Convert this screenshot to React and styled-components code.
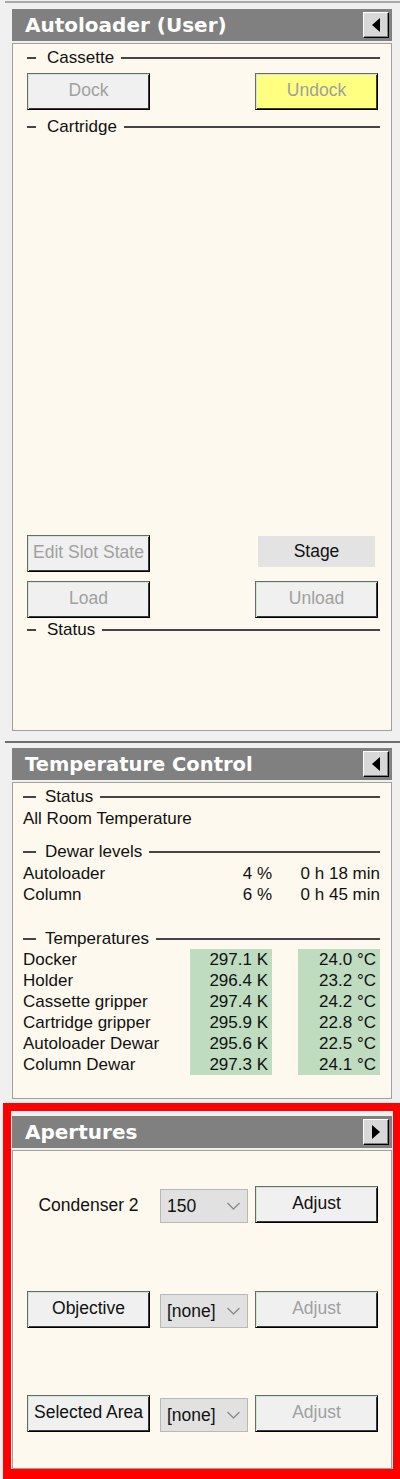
import React from 'react';
import styled, { createGlobalStyle } from 'styled-components';

const Global = createGlobalStyle`
  html, body { margin: 0; padding: 0; background: #f0f0f0; }
  body { width: 400px; height: 1479px; overflow: hidden; font-family: "Liberation Sans", Arial, sans-serif; color: #111; }
`;

const Page = styled.div`
  width: 400px;
  height: 1479px;
  overflow: hidden;
  background: #f0f0f0;
  padding-top: ${p => p.$pt}px;
  box-sizing: border-box;
`;

const Rule = styled.div`
  margin-left: 5px;
  margin-top: ${p => p.$mt || 0}px;
  margin-bottom: ${p => p.$mb}px;
  height: 2px;
  background: ${p => p.$c};
`;

const Panel = styled.section`
  margin-left: ${p => p.$ml}px;
  width: 380px;
`;

const Header = styled.div`
  height: 32px;
  background: #808080;
  display: flex;
  align-items: center;
  justify-content: space-between;
  padding: 0 3px 0 13px;
  box-sizing: border-box;
`;

const Title = styled.h2`
  margin: 0;
  font-family: "DejaVu Sans", Verdana, sans-serif;
  font-weight: bold;
  font-size: ${p => p.$fs}px;
  color: #fff;
  letter-spacing: 0;
`;

const CollapseBtn = styled.button`
  width: 26px;
  height: 26px;
  padding: 0;
  display: flex;
  align-items: center;
  justify-content: center;
  background: #d8d8d8;
  border: 1px solid;
  border-color: #fff #000 #000 #fff;
  box-shadow: inset -1px -1px 0 #808080;
  box-sizing: border-box;
`;

const Content = styled.div`
  margin-top: 2px;
  height: ${p => p.$h}px;
  background: #fdf9ee;
  border: 1px solid #a0a0a0;
  box-sizing: border-box;
  padding: ${p => p.$pad};
  display: flex;
  flex-direction: column;
`;

const Legend = styled.div`
  display: flex;
  align-items: center;
  height: 20px;
  margin-top: ${p => p.$mt || 0}px;
  font-size: 17px;
  &::before {
    content: "";
    width: ${p => p.$lead}px;
    height: 2px;
    background: #454545;
    margin-right: ${p => p.$gap}px;
    flex: none;
  }
  &::after {
    content: "";
    flex: 1;
    height: 2px;
    background: #454545;
    margin-left: 7px;
  }
`;

const BtnRow = styled.div`
  display: flex;
  justify-content: space-between;
  align-items: flex-start;
  padding-right: 2px;
  margin-top: ${p => p.$mt || 0}px;
`;

const WinButton = styled.button`
  width: 123px;
  height: 37px;
  padding: 0 0 2px;
  font-family: "Liberation Sans", Arial, sans-serif;
  font-size: 17.5px;
  white-space: nowrap;
  color: ${p => (p.$disabled ? '#a0a0a0' : '#111')};
  background: ${p => p.$bg || '#f0f0f0'};
  border: 1px solid;
  border-color: #6a6a6a #000 #000 #6a6a6a;
  box-shadow: inset 1px 1px 0 #cfe8cf, inset -1px -1px 0 #3a3a3a;
  box-sizing: border-box;
`;

const SlotArea = styled.div`
  height: ${p => p.$h}px;
`;

const RightCol = styled.div`
  width: 123px;
  display: flex;
  justify-content: center;
`;

const StageLabel = styled.div`
  margin-top: 1px;
  width: 117px;
  height: 31px;
  background: #e3e3e3;
  display: flex;
  align-items: center;
  justify-content: center;
  font-size: 17.5px;
  color: #111;
`;

const TextLine = styled.div`
  height: 21px;
  line-height: 21px;
  font-size: 17px;
  margin-top: ${p => p.$mt || 0}px;
`;

const DataGrid = styled.div`
  display: grid;
  grid-template-columns: 1fr 82px 82px;
  column-gap: 26px;
  margin-top: ${p => p.$mt || 0}px;
  font-size: 17px;
`;

const Cell = styled.div`
  height: 21px;
  line-height: 21px;
  white-space: nowrap;
  text-align: ${p => p.$align || 'left'};
  padding-right: ${p => p.$pr || 0}px;
  background: ${p => p.$bg || 'transparent'};
`;

const HighlightFrame = styled.div`
  margin-top: 4px;
  margin-left: 3px;
  width: 398px;
  border: 8px solid #ff0000;
  border-bottom-width: 14px;
  padding-top: 5px;
  box-sizing: border-box;
  background: #f0f0f0;
`;

const ApRows = styled.div`
  display: flex;
  flex-direction: column;
  gap: 67px;
`;

const ApRow = styled.div`
  display: flex;
  align-items: flex-start;
  gap: 0;
`;

const ApLabel = styled.div`
  width: 123px;
  height: 38px;
  display: flex;
  align-items: center;
  justify-content: center;
  font-size: 17.5px;
  color: #111;
`;

const Select = styled.div`
  width: 88px;
  height: 34px;
  margin: 3px 7px 0 10px;
  background: #e1e1e1;
  border: 1px solid #b8b8b8;
  box-sizing: border-box;
  display: flex;
  align-items: center;
  justify-content: space-between;
  padding: 0 7px 0 6px;
  font-size: 17.5px;
  color: #111;
`;

const Arrow = ({ dir }) => (
  <svg width="8" height="14" viewBox="0 0 8 14">
    <polygon points={dir === 'left' ? '8,0 8,14 0,7' : '0,0 0,14 8,7'} fill="#000" />
  </svg>
);

const Chevron = () => (
  <svg width="13" height="8" viewBox="0 0 13 8">
    <polyline points="0.5,1 6.5,7 12.5,1" fill="none" stroke="#8a8a8a" strokeWidth="1.3" />
  </svg>
);

const PanelHeader = ({ title, dir, fs }) => (
  <Header>
    <Title $fs={fs}>{title}</Title>
    <CollapseBtn aria-label="toggle">
      <Arrow dir={dir} />
    </CollapseBtn>
  </Header>
);

const temps = [
  ['Docker', '297.1 K', '24.0 °C'],
  ['Holder', '296.4 K', '23.2 °C'],
  ['Cassette gripper', '297.4 K', '24.2 °C'],
  ['Cartridge gripper', '295.9 K', '22.8 °C'],
  ['Autoloader Dewar', '295.6 K', '22.5 °C'],
  ['Column Dewar', '297.3 K', '24.1 °C'],
];

const GREEN = '#c0dcc0';

export default function App() {
  return (
    <Page $pt={1}>
      <Global />
      <Rule $c="#a8a8a8" $mb={6} />
      <Panel $ml={12}>
        <PanelHeader title="Autoloader (User)" dir="left" fs={20} />
        <Content $h={688} $pad="4px 11px 0 14px">
          <Legend $lead={9} $gap={11}>Cassette</Legend>
          <BtnRow $mt={5}>
            <WinButton $disabled>Dock</WinButton>
            <WinButton $disabled $bg="#ffff80">Undock</WinButton>
          </BtnRow>
          <Legend $lead={9} $gap={11} $mt={7}>Cartridge</Legend>
          <SlotArea $h={398} />
          <BtnRow>
            <WinButton $disabled>Edit Slot State</WinButton>
            <RightCol>
              <StageLabel>Stage</StageLabel>
            </RightCol>
          </BtnRow>
          <BtnRow $mt={9}>
            <WinButton $disabled>Load</WinButton>
            <WinButton $disabled>Unload</WinButton>
          </BtnRow>
          <Legend $lead={9} $gap={11} $mt={2}>Status</Legend>
        </Content>
      </Panel>

      <Rule $c="#6e6e6e" $mt={10} $mb={5} />
      <Panel $ml={12}>
        <PanelHeader title="Temperature Control" dir="left" fs={19.5} />
        <Content $h={317} $pad="4px 11px 0 10px">
          <Legend $lead={13} $gap={9}>Status</Legend>
          <TextLine $mt={1}>All Room Temperature</TextLine>
          <Legend $lead={13} $gap={9} $mt={13}>Dewar levels</Legend>
          <DataGrid $mt={1}>
            <Cell>Autoloader</Cell>
            <Cell $align="right">4 %</Cell>
            <Cell $align="right">0 h 18 min</Cell>
            <Cell>Column</Cell>
            <Cell $align="right">6 %</Cell>
            <Cell $align="right">0 h 45 min</Cell>
          </DataGrid>
          <Legend $lead={13} $gap={9} $mt={24}>Temperatures</Legend>
          <DataGrid>
            {temps.map(([name, k, c]) => (
              <React.Fragment key={name}>
                <Cell>{name}</Cell>
                <Cell $align="right" $pr={4} $bg={GREEN}>{k}</Cell>
                <Cell $align="right" $pr={4} $bg={GREEN}>{c}</Cell>
              </React.Fragment>
            ))}
          </DataGrid>
        </Content>
      </Panel>

      <HighlightFrame>
        <Panel $ml={1}>
          <PanelHeader title="Apertures" dir="right" fs={20} />
          <Content $h={319} $pad="35px 0 0 14px">
            <ApRows>
              <ApRow>
                <ApLabel>Condenser 2</ApLabel>
                <Select>150<Chevron /></Select>
                <WinButton>Adjust</WinButton>
              </ApRow>
              <ApRow>
                <WinButton>Objective</WinButton>
                <Select>[none]<Chevron /></Select>
                <WinButton $disabled>Adjust</WinButton>
              </ApRow>
              <ApRow>
                <WinButton>Selected Area</WinButton>
                <Select>[none]<Chevron /></Select>
                <WinButton $disabled>Adjust</WinButton>
              </ApRow>
            </ApRows>
          </Content>
        </Panel>
      </HighlightFrame>
    </Page>
  );
}
